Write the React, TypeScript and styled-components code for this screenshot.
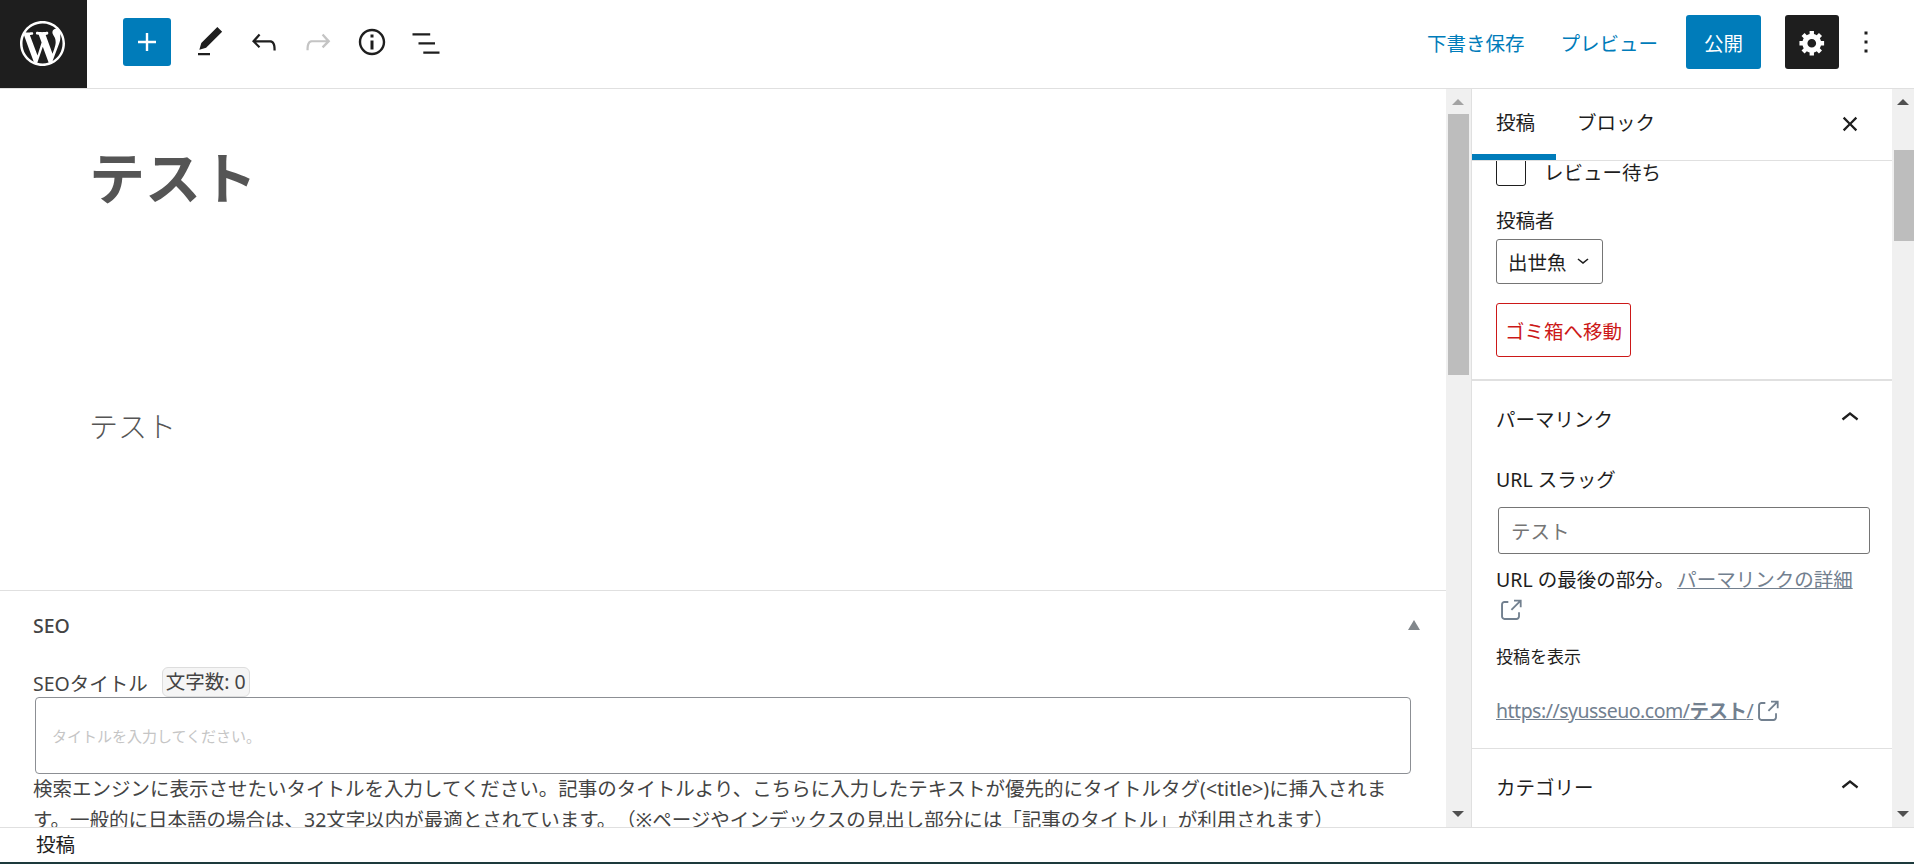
import React from 'react';
import styled, { createGlobalStyle } from 'styled-components';

const GlobalStyle = createGlobalStyle`
  html, body {
    margin: 0;
    padding: 0;
    height: 864px;
    overflow: hidden;
    background: #fff;
  }
  * { box-sizing: border-box; }
  body {
    font-family: "Noto Sans", "Noto Sans CJK JP", sans-serif;
    color: #1e1e1e;
    text-spacing-trim: space-all;
  }
`;

const ICONS: Record<string, string> = {
  plus: 'M18 11.2h-5.2V6h-1.6v5.2H6v1.6h5.2V18h1.6v-5.2H18z',
  edit: 'M20.1 5.1L16.9 2 6.2 12.7l-1.3 4.4 4.5-1.3L20.1 5.1zM4 20.8h8v-1.5H4v1.5z',
  undo: 'M18.3 11.7c-.6-.6-1.4-.9-2.3-.9H6.7l2.9-3.3-1.1-1-4.5 5L8.5 16l1-1-2.7-2.7H16c.5 0 .9.2 1.3.5 1 1 1 3.4 1 4.5v.3h1.5v-.2c0-1.5 0-4.3-1.5-5.7z',
  redo: 'M15.6 6.5l-1.1 1 2.9 3.3H8c-.9 0-1.7.3-2.3.9-1.4 1.5-1.4 4.2-1.4 5.6v.2h1.5v-.3c0-1.1 0-3.5 1-4.5.3-.3.7-.5 1.3-.5h9.2L14.5 15l1.1 1.1 4.6-4.6-4.6-5z',
  info: 'M12 3.2c-4.8 0-8.8 3.9-8.8 8.8 0 4.8 3.9 8.8 8.8 8.8 4.8 0 8.8-3.9 8.8-8.8 0-4.8-4-8.8-8.8-8.8zm0 16c-4 0-7.2-3.3-7.2-7.2C4.8 8 8 4.8 12 4.8s7.2 3.3 7.2 7.2c0 4-3.2 7.2-7.2 7.2zM11 17h2v-6h-2v6zm0-8h2V7h-2v2z',
  list: 'M3 6.2h11.8v1.5H3zM7 12.2h11v1.5H7zM10.2 18.3H21v1.5H10.2z',
  more: 'M13 19h-2v-2h2v2zm0-6h-2v-2h2v2zm0-6h-2V5h2v2z',
  close: 'M12 13.06l3.712 3.713 1.061-1.06L13.061 12l3.712-3.712-1.06-1.06L12 10.938 8.288 7.227l-1.061 1.06L10.939 12l-3.712 3.712 1.06 1.061L12 13.061z',
  chevronUp: 'M6.5 12.4L12 8l5.5 4.4-.9 1.2L12 10l-4.5 3.6-1-1.2z',
  chevronDown: 'M17.5 9.6L12 14l-5.5-4.4.9-1.2L12 12l4.5-3.6 1 1.2z',
  external: 'M18.2 17c0 .7-.6 1.2-1.2 1.2H7c-.7 0-1.2-.6-1.2-1.2V7c0-.7.6-1.2 1.2-1.2h3.2V4.2H7C5.5 4.2 4.2 5.5 4.2 7v10c0 1.5 1.2 2.8 2.8 2.8h10c1.5 0 2.8-1.2 2.8-2.8v-3.6h-1.5V17zM14.9 3v1.5h3.7l-6.4 6.4 1.1 1.1 6.4-6.4v3.7h1.5V3h-6.3z',
};

const COG =
  'M18 12h-2.18c-.17.7-.44 1.35-.81 1.93l1.54 1.54-2.1 2.1-1.54-1.54c-.58.36-1.23.63-1.91.79V19H8v-2.18c-.68-.16-1.33-.43-1.91-.79l-1.54 1.54-2.12-2.12 1.54-1.54c-.36-.58-.63-1.23-.79-1.91H1V9.03h2.17c.16-.7.44-1.35.8-1.94L2.43 5.55l2.1-2.1 1.54 1.54c.58-.37 1.24-.64 1.93-.81V2h3v2.18c.68.16 1.33.43 1.91.79l1.54-1.54 2.12 2.12-1.54 1.54c.36.59.64 1.24.8 1.94H18V12zm-8.5 1.5c1.66 0 3-1.34 3-3s-1.34-3-3-3-3 1.34-3 3 1.34 3 3 3z';

const WP_LOGO =
  'M20 10c0-5.51-4.49-10-10-10C4.48 0 0 4.49 0 10c0 5.52 4.48 10 10 10 5.51 0 10-4.48 10-10zM7.78 15.37L4.37 6.22c.55-.02 1.17-.08 1.17-.08.5-.06.44-1.13-.06-1.11 0 0-1.45.11-2.37.11-.18 0-.37 0-.58-.01C4.12 2.69 6.87 1.11 10 1.11c2.33 0 4.45.87 6.05 2.34-.68-.11-1.65.39-1.65 1.58 0 .74.45 1.36.9 2.1.35.61.55 1.36.55 2.46 0 1.49-1.4 5-1.4 5l-3.03-8.37c.54-.02.82-.17.82-.17.5-.05.44-1.25-.06-1.22 0 0-1.44.12-2.38.12-.87 0-2.33-.12-2.33-.12-.5-.03-.56 1.2-.06 1.22l.92.08 1.26 3.41zM17.41 10c.24-.64.74-1.87.43-4.25.7 1.29 1.05 2.71 1.05 4.25 0 3.29-1.73 6.24-4.4 7.78.97-2.59 1.94-5.2 2.92-7.78zM6.1 18.09C3.12 16.65 1.11 13.53 1.11 10c0-1.3.23-2.48.72-3.59C3.25 10.3 4.67 14.2 6.1 18.09zm4.03-6.63l2.58 6.98c-.86.29-1.76.45-2.71.45-.79 0-1.57-.11-2.29-.33.81-2.38 1.62-4.74 2.42-7.1z';

type IconProps = { name: string; size?: number; color?: string };

const Icon: React.FC<IconProps> = ({ name, size = 36, color = '#1e1e1e' }) => (
  <svg width={size} height={size} viewBox="0 0 24 24" fill={color} aria-hidden="true">
    <path d={ICONS[name]} />
  </svg>
);

const Page = styled.div`
  width: 1914px;
  height: 864px;
  display: flex;
  flex-direction: column;
  overflow: hidden;
`;

const Header = styled.header`
  height: 89px;
  flex: none;
  display: flex;
  align-items: flex-start;
  border-bottom: 1px solid #e0e0e0;
`;

const LogoBox = styled.div`
  width: 87px;
  height: 88px;
  background: #1e1e1e;
  padding: 0 3px 2px 0;
  display: flex;
  align-items: center;
  justify-content: center;
`;

const Tools = styled.div`
  display: flex;
  align-items: center;
  margin: 18px 0 0 36px;
  flex: 1;
`;

const PlusButton = styled.div`
  width: 48px;
  height: 48px;
  background: #007cba;
  border-radius: 3px;
  display: flex;
  align-items: center;
  justify-content: center;
  margin-right: 12px;
`;

const ToolButton = styled.div`
  width: 54px;
  height: 48px;
  display: flex;
  align-items: center;
  justify-content: center;
`;

const Actions = styled.div`
  display: flex;
  align-items: center;
  margin-top: 15px;
  padding-right: 30px;
`;

const TextLink = styled.span<{ $gap: number }>`
  color: #007cba;
  font-size: 19.5px;
  margin-right: ${(p) => p.$gap}px;
  white-space: nowrap;
`;

const PublishButton = styled.div`
  width: 75px;
  height: 54px;
  background: #007cba;
  color: #fff;
  border-radius: 3px;
  font-size: 19.5px;
  display: flex;
  align-items: center;
  justify-content: center;
  margin-right: 24px;
`;

const SettingsButton = styled.div`
  width: 54px;
  height: 54px;
  background: #1e1e1e;
  border-radius: 3px;
  display: flex;
  align-items: center;
  justify-content: center;
  margin-right: 9px;
`;

const Body = styled.div`
  flex: 1;
  min-height: 0;
  display: flex;
`;

const EditorColumn = styled.main`
  width: 1446px;
  flex: none;
  overflow: hidden;
`;

const PostArea = styled.div`
  height: 502px;
  border-bottom: 1px solid #e0e0e0;
  padding: 53px 89px 0;
  color: #555;
`;

const PostTitle = styled.h1`
  margin: 0;
  font-size: 56px;
  line-height: 70px;
  font-weight: 700;
`;

const PostText = styled.p`
  margin: 195px 0 0;
  font-size: 29px;
  line-height: 40px;
  font-weight: 300;
`;

const SeoBox = styled.section`
  padding: 0 33px;
  color: #444;
`;

const SeoHeading = styled.div`
  height: 64px;
  padding-top: 4px;
  display: flex;
  align-items: center;
  justify-content: space-between;
  font-size: 19.5px;
  font-weight: 500;
`;

const SeoToggle = styled.span`
  width: 0;
  height: 0;
  margin-right: -7px;
  border-left: 6px solid transparent;
  border-right: 6px solid transparent;
  border-bottom: 10px solid #82878c;
`;

const SeoLabelRow = styled.div`
  height: 42px;
  display: flex;
  align-items: flex-end;
  font-size: 19.5px;
`;

const SeoLabel = styled.span`
  line-height: 30px;
  margin-bottom: -2px;
`;

const CountBadge = styled.span`
  margin-left: 14px;
  height: 30px;
  padding: 0 3px;
  font-size: 19.5px;
  line-height: 28px;
  background: #f5f5f5;
  border: 1px solid #ddd;
  border-radius: 6px;
`;

const SeoInput = styled.div`
  width: 1376px;
  height: 77px;
  margin-left: 2px;
  padding: 0 16px;
  display: flex;
  align-items: center;
  border: 1px solid #8c8f94;
  border-radius: 4px;
  color: #c5c5c5;
  font-size: 15px;
`;

const SeoHelp = styled.p`
  margin: -1px 0 0;
  font-size: 19.5px;
  line-height: 31px;
  width: 1372px;
`;

const Track = styled.div<{ $width: number }>`
  width: ${(p) => p.$width}px;
  flex: none;
  background: #f0f0f0;
  display: flex;
  flex-direction: column;
  align-items: flex-end;
  position: relative;
`;

const Thumb = styled.div<{ $top: number; $height: number; $width: number; $inset: number }>`
  width: ${(p) => p.$width}px;
  height: ${(p) => p.$height}px;
  margin-top: ${(p) => p.$top}px;
  margin-right: ${(p) => p.$inset}px;
  background: #bdbdbd;
`;

const Arrow = styled.span<{ $down?: boolean; $color: string; $center: number }>`
  position: absolute;
  left: ${(p) => p.$center - 6}px;
  ${(p) => (p.$down ? 'bottom: 10px;' : 'top: 10px;')}
  width: 0;
  height: 0;
  border-left: 6px solid transparent;
  border-right: 6px solid transparent;
  ${(p) =>
    p.$down
      ? `border-top: 6px solid ${p.$color};`
      : `border-bottom: 6px solid ${p.$color};`}
`;

const Sidebar = styled.aside`
  width: 421px;
  flex: none;
  border-left: 1px solid #e0e0e0;
  display: flex;
  flex-direction: column;
  overflow: hidden;
`;

const TabBar = styled.div`
  height: 72px;
  flex: none;
  display: flex;
  border-bottom: 1px solid #e0e0e0;
  position: relative;
  z-index: 1;
  background: #fff;
`;

const Tab = styled.div<{ $active?: boolean }>`
  height: 71px;
  padding: 0 24px 0 ${(p) => (p.$active ? '24px' : '21px')};
  display: flex;
  align-items: center;
  font-size: 19.5px;
  border-bottom: ${(p) => (p.$active ? '6px solid #007cba' : '6px solid transparent')};
  width: ${(p) => (p.$active ? '84px' : 'auto')};
  white-space: nowrap;
`;

const CloseBox = styled.div`
  margin-left: auto;
  width: 42px;
  height: 70px;
  margin-right: 21px;
  display: flex;
  align-items: center;
  justify-content: center;
`;

const Panel = styled.div`
  padding: 0 24px;
  height: 220px;
  flex: none;
  border-bottom: 2px solid #e0e0e0;
`;

const CheckRow = styled.div`
  display: flex;
  align-items: center;
  margin-top: -5px;
  font-size: 19.5px;
  height: 30px;
`;

const CheckBox = styled.span`
  width: 30px;
  height: 30px;
  border: 1px solid #1e1e1e;
  border-radius: 3px;
  margin-right: 18px;
`;

const FieldLabel = styled.div`
  font-size: 19.5px;
  line-height: 28px;
  margin-top: 21px;
`;

const SelectBox = styled.div`
  width: 107px;
  height: 45px;
  margin-top: 4px;
  border: 1px solid #757575;
  border-radius: 3px;
  padding-left: 11px;
  display: flex;
  align-items: center;
  gap: 4px;
  font-size: 19.5px;
  color: #1e1e1e;
`;

const TrashButton = styled.div`
  width: 135px;
  height: 54px;
  margin-top: 19px;
  border: 1px solid #cc1818;
  border-radius: 3px;
  color: #cc1818;
  font-size: 19.5px;
  display: flex;
  align-items: center;
  justify-content: center;
  white-space: nowrap;
`;

const Section = styled.div<{ $height?: number }>`
  padding: 0 24px;
  ${(p) => p.$height && `height: ${p.$height}px; border-bottom: 1px solid #e0e0e0;`}
`;

const SectionHeader = styled.div`
  height: 74px;
  display: flex;
  align-items: center;
  justify-content: space-between;
  font-size: 19.5px;
`;

const SlugLabel = styled.div`
  font-size: 19.5px;
  line-height: 28px;
  margin-top: 11px;
`;

const SlugInput = styled.div`
  width: 372px;
  height: 47px;
  margin: 13px 0 0 2px;
  padding-left: 12px;
  display: flex;
  align-items: center;
  border: 1px solid #757575;
  border-radius: 3px;
  font-size: 19.5px;
  color: #757575;
`;

const HelpText = styled.p`
  margin: 11px 0 0;
  font-size: 19.5px;
  line-height: 30px;
`;

const MutedLink = styled.a`
  color: #72808f;
  text-decoration: underline;
  margin-left: 3px;
`;

const IconLine = styled.div`
  height: 30px;
  display: flex;
  align-items: center;
`;

const ViewLabel = styled.div`
  font-size: 17px;
  line-height: 24px;
  margin-top: 20px;
`;

const PostLink = styled.div`
  margin-top: 27px;
  display: flex;
  align-items: center;
  font-size: 19.5px;
  color: #72808f;
  line-height: 30px;
`;

const LinkText = styled.span`
  text-decoration: underline;
  letter-spacing: -0.5px;

  b {
    font-weight: 700;
  }
`;

const Footer = styled.footer`
  height: 35px;
  flex: none;
  padding-left: 36px;
  border-top: 1px solid #e0e0e0;
  font-size: 19.5px;
  line-height: 33px;
  background: #fff;
`;

const BottomStrip = styled.div`
  height: 2px;
  flex: none;
  background: #1d3a3c;
`;

const App: React.FC = () => {
  return (
    <Page>
      <GlobalStyle />
      <Header>
        <LogoBox>
          <svg width="45" height="45" viewBox="0 0 20 20" fill="#fff" aria-hidden="true">
            <path d={WP_LOGO} />
          </svg>
        </LogoBox>
        <Tools>
          <PlusButton>
            <Icon name="plus" color="#fff" />
          </PlusButton>
          <ToolButton>
            <Icon name="edit" />
          </ToolButton>
          <ToolButton>
            <Icon name="undo" />
          </ToolButton>
          <ToolButton>
            <Icon name="redo" color="#c4c4c4" />
          </ToolButton>
          <ToolButton>
            <Icon name="info" />
          </ToolButton>
          <ToolButton>
            <Icon name="list" />
          </ToolButton>
        </Tools>
        <Actions>
          <TextLink $gap={36}>下書き保存</TextLink>
          <TextLink $gap={28}>プレビュー</TextLink>
          <PublishButton>公開</PublishButton>
          <SettingsButton>
            <svg width="29" height="29" viewBox="0 0 20 20" fill="#fff" aria-hidden="true">
              <path d={COG} />
            </svg>
          </SettingsButton>
          <Icon name="more" />
        </Actions>
      </Header>

      <Body>
        <EditorColumn>
          <PostArea>
            <PostTitle>テスト</PostTitle>
            <PostText>テスト</PostText>
          </PostArea>
          <SeoBox>
            <SeoHeading>
              SEO
              <SeoToggle />
            </SeoHeading>
            <SeoLabelRow>
              <SeoLabel>SEOタイトル</SeoLabel>
              <CountBadge>文字数: 0</CountBadge>
            </SeoLabelRow>
            <SeoInput>タイトルを入力してください。</SeoInput>
            <SeoHelp>
              検索エンジンに表示させたいタイトルを入力してください。記事のタイトルより、こちらに入力したテキストが優先的にタイトルタグ(&lt;title&gt;)に挿入されます。一般的に日本語の場合は、32文字以内が最適とされています。（※ページやインデックスの見出し部分には「記事のタイトル」が利用されます）
            </SeoHelp>
          </SeoBox>
        </EditorColumn>

        <Track $width={25}>
          <Arrow $color="#a3a3a3" $center={12} />
          <Thumb $top={25} $height={261} $width={21} $inset={2} />
          <Arrow $down $color="#505050" $center={12} />
        </Track>

        <Sidebar>
          <TabBar>
            <Tab $active>投稿</Tab>
            <Tab>ブロック</Tab>
            <CloseBox>
              <Icon name="close" />
            </CloseBox>
          </TabBar>
          <Panel>
            <CheckRow>
              <CheckBox />
              レビュー待ち
            </CheckRow>
            <FieldLabel>投稿者</FieldLabel>
            <SelectBox>
              出世魚
              <Icon name="chevronDown" size={24} />
            </SelectBox>
            <TrashButton>ゴミ箱へ移動</TrashButton>
          </Panel>
          <Section $height={368}>
            <SectionHeader>
              パーマリンク
              <Icon name="chevronUp" />
            </SectionHeader>
            <SlugLabel>URL スラッグ</SlugLabel>
            <SlugInput>テスト</SlugInput>
            <HelpText>
              URL の最後の部分。
              <MutedLink>パーマリンクの詳細</MutedLink>
            </HelpText>
            <IconLine>
              <Icon name="external" size={29} color="#72808f" />
            </IconLine>
            <ViewLabel>投稿を表示</ViewLabel>
            <PostLink>
              <LinkText>
                https://syusseuo.com/<b>テスト</b>/
              </LinkText>
              <Icon name="external" size={29} color="#72808f" />
            </PostLink>
          </Section>
          <Section>
            <SectionHeader>
              カテゴリー
              <Icon name="chevronUp" />
            </SectionHeader>
          </Section>
        </Sidebar>

        <Track $width={22}>
          <Arrow $color="#505050" $center={11} />
          <Thumb $top={61} $height={91} $width={20} $inset={0} />
          <Arrow $down $color="#505050" $center={11} />
        </Track>
      </Body>

      <Footer>投稿</Footer>
      <BottomStrip />
    </Page>
  );
};

export default App;
